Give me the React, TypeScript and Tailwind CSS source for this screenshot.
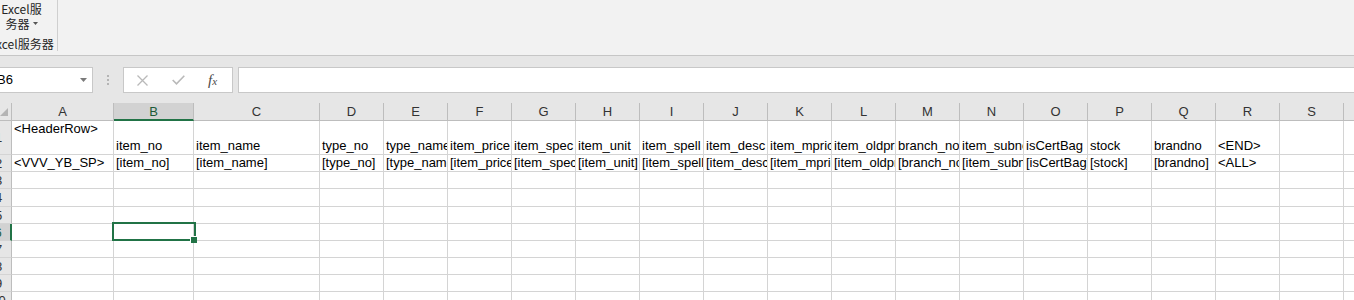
import React from "react";

type Col = { k: string; w: string };
const cols: Col[] = [
  { k: "A", w: "w-[102px]" },
  { k: "B", w: "w-[80px]" },
  { k: "C", w: "w-[126px]" },
  { k: "D", w: "w-[64px]" },
  { k: "E", w: "w-[64px]" },
  { k: "F", w: "w-[64px]" },
  { k: "G", w: "w-[64px]" },
  { k: "H", w: "w-[64px]" },
  { k: "I", w: "w-[64px]" },
  { k: "J", w: "w-[64px]" },
  { k: "K", w: "w-[64px]" },
  { k: "L", w: "w-[64px]" },
  { k: "M", w: "w-[64px]" },
  { k: "N", w: "w-[64px]" },
  { k: "O", w: "w-[64px]" },
  { k: "P", w: "w-[64px]" },
  { k: "Q", w: "w-[64px]" },
  { k: "R", w: "w-[64px]" },
  { k: "S", w: "w-[64px]" },
  { k: "T", w: "w-[64px]" },
];

const row1 = [
  "<HeaderRow>",
  "item_no",
  "item_name",
  "type_no",
  "type_name",
  "item_price",
  "item_spec",
  "item_unit",
  "item_spell",
  "item_desc",
  "item_mprice",
  "item_oldprice",
  "branch_no",
  "item_subno",
  "isCertBag",
  "stock",
  "brandno",
  "<END>",
];
const row2 = [
  "<VVV_YB_SP>",
  "[item_no]",
  "[item_name]",
  "[type_no]",
  "[type_name]",
  "[item_price]",
  "[item_spec]",
  "[item_unit]",
  "[item_spell]",
  "[item_desc]",
  "[item_mprice]",
  "[item_oldprice]",
  "[branch_no]",
  "[item_subno]",
  "[isCertBag]",
  "[stock]",
  "[brandno]",
  "<ALL>",
];

const rowHeights = [
  "h-[34px]",
  "h-[17px]",
  "h-[17px]",
  "h-[18px]",
  "h-[17px]",
  "h-[17px]",
  "h-[17px]",
  "h-[17px]",
  "h-[17px]",
  "h-[17px]",
];

function Ribbon() {
  return (
    <div className="h-[56px] bg-[#f2f2f2] border-b border-[#c6c6c6] flex font-['Noto_Sans_CJK_SC','Noto_Sans',sans-serif] text-[12px] text-[#262626]">
      <div className="ml-[-14px] w-[72px] h-[51px] border-r border-[#cfcfcf] flex flex-col items-center">
        <div className="leading-[15px] pt-[1px] text-center">Excel服</div>
        <div className="leading-[15px] flex items-center gap-[3px]">
          <span>务器</span>
          <svg width="5" height="3" viewBox="0 0 5 3">
            <path d="M0 0 H5 L2.5 3 Z" fill="#555" />
          </svg>
        </div>
        <div className="leading-[15px] mt-[5px] whitespace-nowrap">Excel服务器</div>
      </div>
    </div>
  );
}

function FormulaBar() {
  return (
    <div className="h-[47px] bg-[#e6e6e6] pt-[11px] flex items-start font-['Liberation_Sans',sans-serif]">
      <div className="ml-[-12px] w-[105px] h-[26px] bg-white border border-[#c8c8c8] flex items-center justify-between pl-[8px] pr-[5px] text-[13px] text-black">
        <span>B6</span>
        <svg width="7" height="4" viewBox="0 0 7 4">
          <path d="M0 0 H7 L3.5 4 Z" fill="#7a7a7a" />
        </svg>
      </div>
      <div className="w-[30px] h-[26px] flex items-center justify-center">
        <svg width="2" height="10" viewBox="0 0 2 10">
          <rect x="0" y="0" width="2" height="2" fill="#b4b4b4" />
          <rect x="0" y="4" width="2" height="2" fill="#b4b4b4" />
          <rect x="0" y="8" width="2" height="2" fill="#b4b4b4" />
        </svg>
      </div>
      <div className="w-[110px] h-[26px] bg-white border border-[#c8c8c8] flex items-center">
        <svg className="ml-[13px]" width="11" height="11" viewBox="0 0 11 11">
          <path d="M0.5 0.5 L10.5 10.5 M10.5 0.5 L0.5 10.5" stroke="#b9b9b9" strokeWidth="1.3" fill="none" />
        </svg>
        <svg className="ml-[24px]" width="13" height="10" viewBox="0 0 13 10">
          <path d="M0.7 5 L4.5 8.8 L12.3 0.8" stroke="#b9b9b9" strokeWidth="1.6" fill="none" />
        </svg>
        <span className="ml-[23px] font-['Liberation_Serif',serif] italic text-[15px] text-[#4a4a4a] leading-none">
          f<span className="text-[11px]">x</span>
        </span>
      </div>
      <div className="ml-[5px] flex-1 h-[26px] bg-white border-y border-l border-[#c8c8c8]" />
    </div>
  );
}

function HeaderRow() {
  return (
    <div className="flex h-[18px] bg-[#e6e6e6]">
      <div className="shrink-0 ml-[-14px] w-[26px] h-[18px] border-r border-b border-[#bdbdbd] relative">
        <svg className="absolute right-[3px] bottom-[4px]" width="8" height="8" viewBox="0 0 8 8">
          <path d="M0 8 H8 V0 Z" fill="#b4b4b4" />
        </svg>
      </div>
      {cols.map((c) =>
        c.k === "B" ? (
          <div
            key={c.k}
            className={`shrink-0 ${c.w} h-[18px] bg-[#d2d2d2] border-r border-r-[#bdbdbd] border-b-2 border-b-[#217346] flex justify-center pt-[1px] text-[13px] leading-[16px] text-[#1d5b38]`}
          >
            {c.k}
          </div>
        ) : (
          <div
            key={c.k}
            className={`shrink-0 ${c.w} h-[18px] border-r border-b border-[#bdbdbd] flex justify-center pt-[1px] text-[13px] leading-[16px] text-[#333]`}
          >
            {c.k}
          </div>
        )
      )}
    </div>
  );
}

function Sheet() {
  return (
    <div className="font-['Liberation_Sans',sans-serif]">
      <HeaderRow />
      {rowHeights.map((h, ri) => {
        const rowNum = ri + 1;
        const selectedRow = rowNum === 6;
        const data = rowNum === 1 ? row1 : rowNum === 2 ? row2 : [];
        return (
          <div key={ri} className={`flex ${h}`}>
            <div
              className={`shrink-0 ml-[-14px] w-[26px] ${h} border-b border-b-[#d4d4d4] flex items-center justify-center text-[13px] leading-[15px] ${
                selectedRow
                  ? "bg-[#d2d2d2] border-r-2 border-r-[#217346] text-[#1d5b38]"
                  : "bg-[#e6e6e6] border-r border-r-[#bdbdbd] text-[#333]"
              }`}
            >
              {rowNum}
            </div>
            {cols.map((c, ci) => {
              const text = data[ci] ?? "";
              const isSel = rowNum === 6 && c.k === "B";
              if (isSel) {
                return (
                  <div key={c.k} className={`shrink-0 ${c.w} ${h} border-r border-b border-[#d4d4d4] relative`}>
                    <div className="absolute left-[-2px] top-[-2px] w-[84px] h-[19px] border-2 border-[#217346] z-10" />
                    <div className="absolute left-[76px] top-[12px] w-[7px] h-[7px] bg-white z-20 pl-[1px] pt-[1px]">
                      <div className="w-[6px] h-[6px] bg-[#217346]" />
                    </div>
                  </div>
                );
              }
              const top = rowNum === 1 && ci === 0;
              return (
                <div
                  key={c.k}
                  className={`shrink-0 ${c.w} ${h} border-r border-b border-[#d4d4d4] overflow-hidden whitespace-nowrap pl-[2px] flex ${
                    top ? "items-start" : "items-end pb-[1px]"
                  } text-[13px] leading-[15px] text-black`}
                >
                  {text}
                </div>
              );
            })}
          </div>
        );
      })}
    </div>
  );
}

export default function App() {
  return (
    <div className="w-[1354px] h-[300px] overflow-hidden bg-white">
      <Ribbon />
      <FormulaBar />
      <Sheet />
    </div>
  );
}
